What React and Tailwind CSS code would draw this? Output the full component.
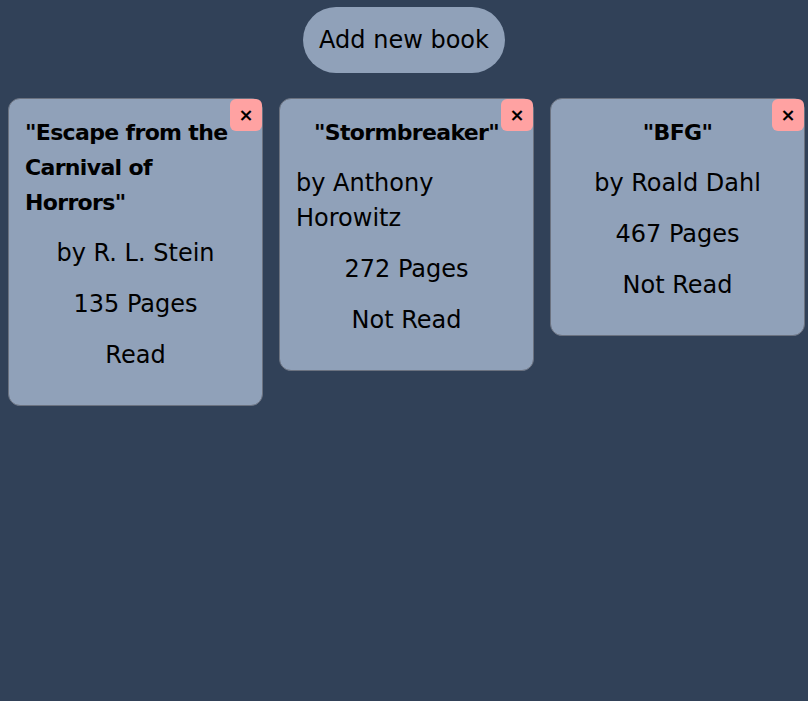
const books = [
  { title: "Escape from the Carnival of Horrors", author: "R. L. Stein", pages: 135, read: true },
  { title: "Stormbreaker", author: "Anthony Horowitz", pages: 272, read: false },
  { title: "BFG", author: "Roald Dahl", pages: 467, read: false },
];

function BookCard({ book }) {
  return (
    <div className="relative flex flex-col items-center gap-4 rounded-xl border border-[#6b7280] bg-slate-400 p-4 pb-8 text-2xl leading-[35px] text-black">
      <button className="absolute right-0 top-0 flex h-8 w-8 items-center justify-center rounded-md bg-red-300 text-lg font-bold leading-none">
        ×
      </button>
      <p className="text-[22px] font-bold tracking-[-0.03em]">"{book.title}"</p>
      <p>by {book.author}</p>
      <p>{book.pages} Pages</p>
      <p>{book.read ? "Read" : "Not Read"}</p>
    </div>
  );
}

export default function App() {
  return (
    <div className="min-h-screen bg-slate-700 font-['DejaVu_Sans',sans-serif]">
      <div className="flex justify-center pt-[7px]">
        <button className="h-[66px] rounded-full bg-slate-400 px-4 text-2xl text-black">
          Add new book
        </button>
      </div>
      <div className="mt-[25px] grid grid-cols-[repeat(3,255px)] items-start gap-4 pl-2">
        {books.map((b) => (
          <BookCard key={b.title} book={b} />
        ))}
      </div>
    </div>
  );
}
